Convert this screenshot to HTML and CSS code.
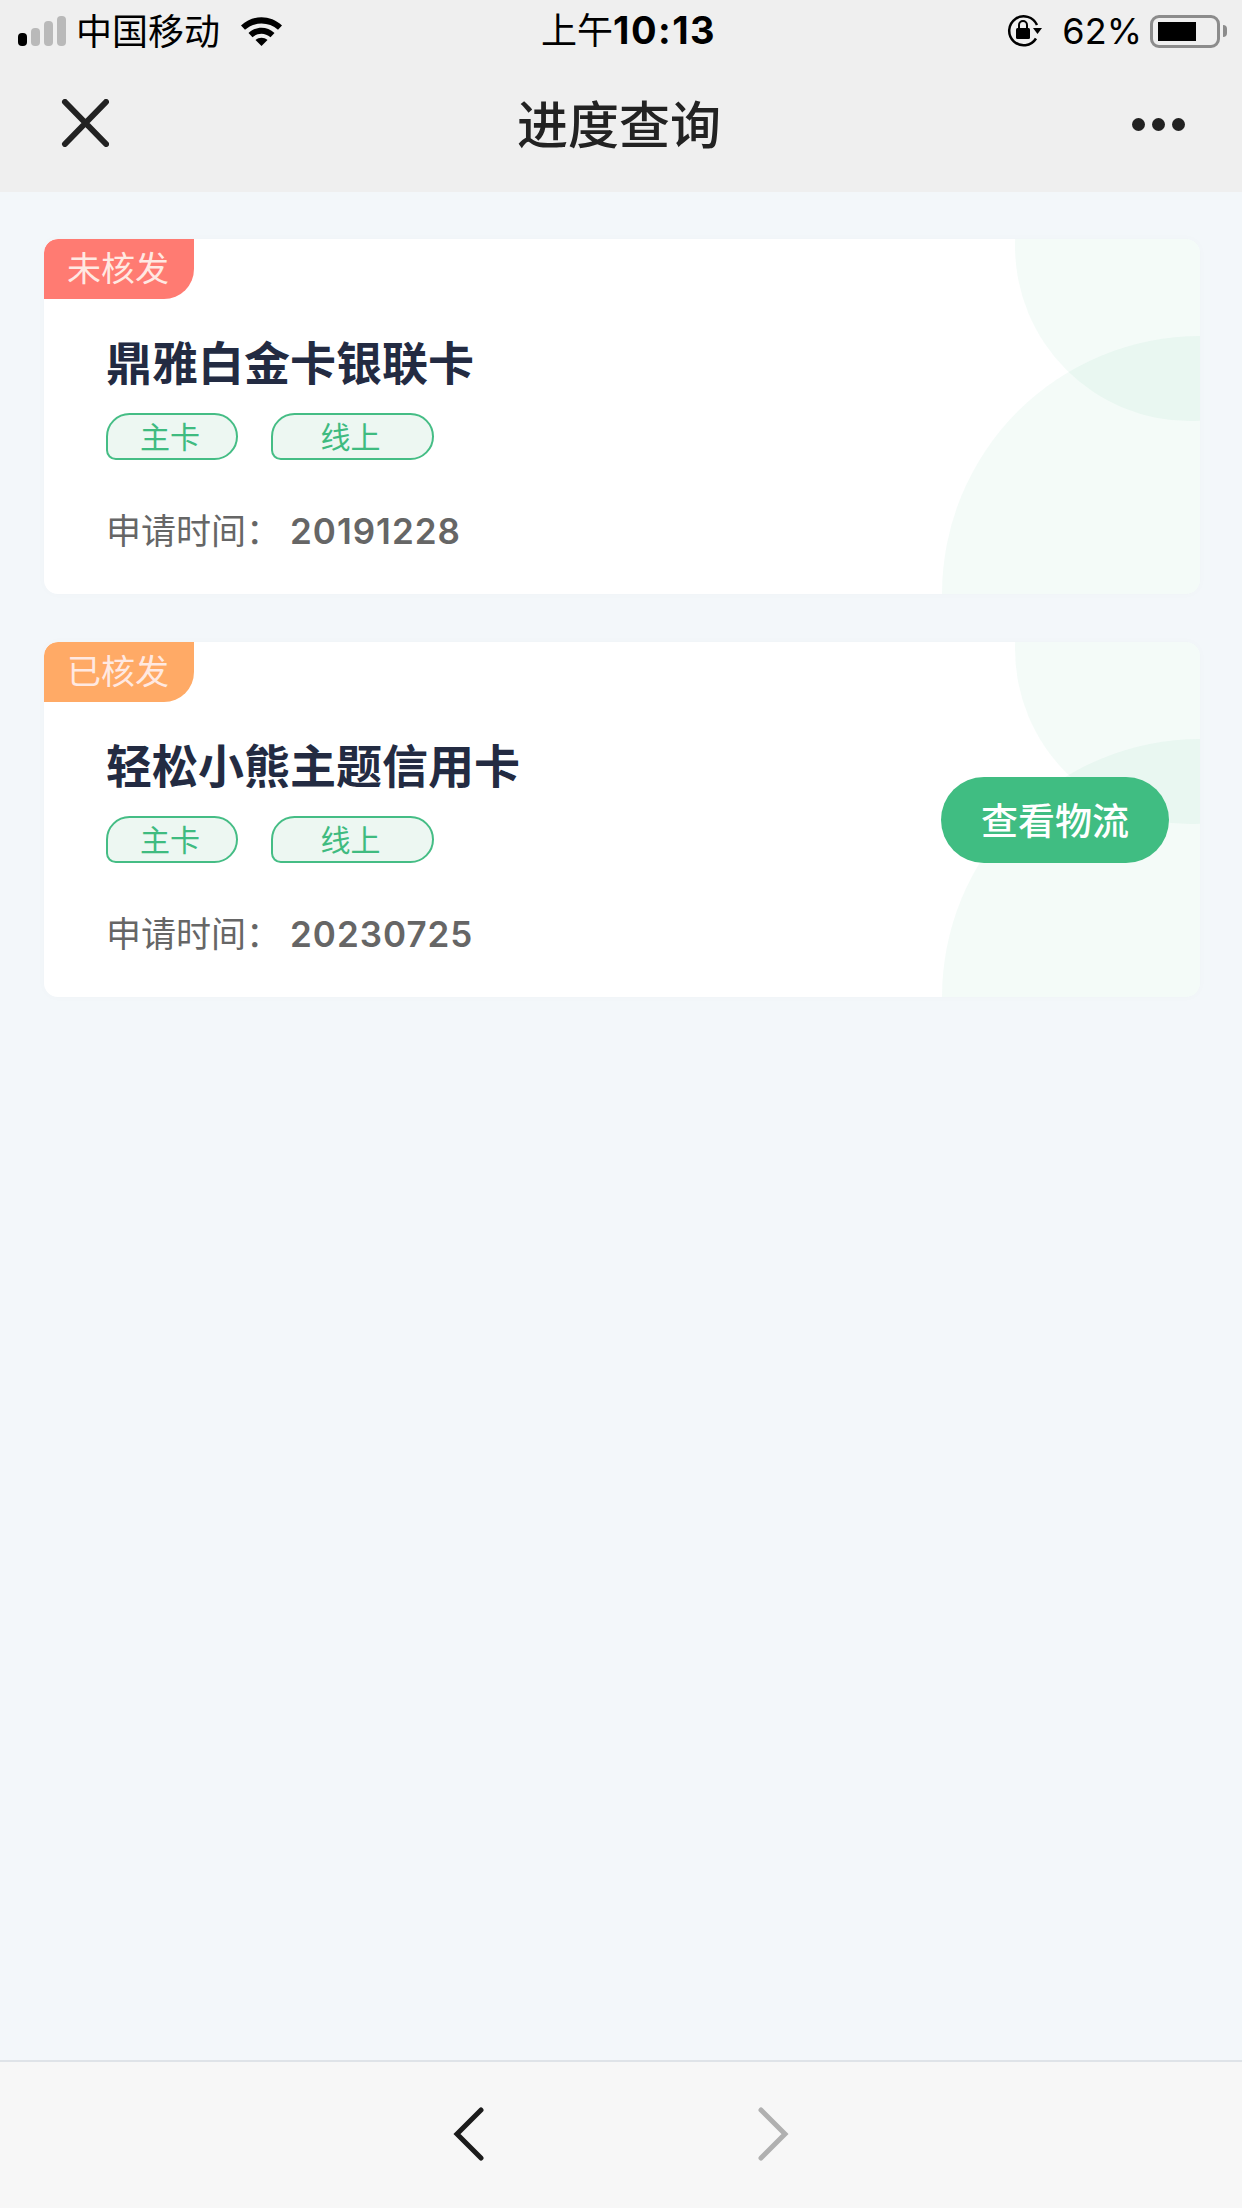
FILE: index.html
```html
<!DOCTYPE html>
<html>
<head>
<meta charset="utf-8">
<title>进度查询</title>
<link rel="stylesheet" href="styles.css">
</head>
<body>
<div class="app">
  <div class="topBar">
    <div class="statusBar">
      <div class="statusLeft">
        <div class="signal">
          <span class="bar bar1"></span>
          <span class="bar bar2"></span>
          <span class="bar bar3"></span>
          <span class="bar bar4"></span>
        </div>
        <span class="carrier">中国移动</span>
        <svg class="wifi" width="43" height="30" viewBox="0 0 43 30">
          <path d="M1 9.500C12.500 -1.500 30.500 -1.500 42 9.500L38 13.800C29 5.500 14 5.500 5 13.800Z" fill="#000"/>
          <path d="M8.500 17C16 10 27 10 34.500 17L30.500 21.200C25 16.500 18 16.500 12.500 21.200Z" fill="#000"/>
          <path d="M15.500 24C19 21 24 21 27.500 24L21.500 30Z" fill="#000"/>
        </svg>
      </div>
      <div class="clock">上午<b>10:13</b></div>
      <div class="statusRight">
        <svg class="rotLock" width="36" height="34" viewBox="0 0 36 34">
          <path d="M29 24.500A14.500 14.500 0 1 1 30 11" fill="none" stroke="#000" stroke-width="2.500"/>
          <path d="M26 14L35 14L30.500 20Z" fill="#000"/>
          <rect x="9" y="14" width="14" height="11" rx="1.500" fill="#000"/>
          <path d="M12 14V11A4 4 0 0 1 20 11V14" fill="none" stroke="#000" stroke-width="2"/>
        </svg>
        <span class="percent">62%</span>
        <div class="battery"><div class="batteryFill"></div></div>
        <span class="batteryCap"></span>
      </div>
    </div>
    <div class="navBar">
      <svg class="closeIcon" width="48" height="48" viewBox="0 0 48 48">
        <path d="M4 3L45 45M45 3L4 45" stroke="#222" stroke-width="6" stroke-linecap="round"/>
      </svg>
      <div class="navTitle">进度查询</div>
      <div class="moreDots"><span></span><span></span><span></span></div>
    </div>
  </div>

  <div class="content">
    <div class="card">
      <span class="circleTop"></span>
      <span class="circleBottom"></span>
      <div class="cardInfo">
        <div class="stateTag stateRed">未核发</div>
        <div class="cardName">鼎雅白金卡银联卡</div>
        <div class="chips">
          <span class="chip chipShort">主卡</span>
          <span class="chip chipLong">线上</span>
        </div>
        <div class="applyDate">申请时间：<span class="dateNum">20191228</span></div>
      </div>
    </div>

    <div class="card">
      <span class="circleTop"></span>
      <span class="circleBottom"></span>
      <div class="cardInfo">
        <div class="stateTag stateOrange">已核发</div>
        <div class="cardName">轻松小熊主题信用卡</div>
        <div class="chips">
          <span class="chip chipShort">主卡</span>
          <span class="chip chipLong">线上</span>
        </div>
        <div class="applyDate">申请时间：<span class="dateNum">20230725</span></div>
      </div>
      <div class="logisticsBtn">查看物流</div>
    </div>
  </div>

  <div class="bottomBar">
    <svg class="arrow" width="34" height="54" viewBox="0 0 34 54">
      <path d="M29 3L5 27L29 51" fill="none" stroke="#1c1c1c" stroke-width="5" stroke-linecap="round"/>
    </svg>
    <svg class="arrow" width="34" height="54" viewBox="0 0 34 54">
      <path d="M5 3L29 27L5 51" fill="none" stroke="#b0b0b0" stroke-width="5" stroke-linecap="round"/>
    </svg>
  </div>
</div>
</body>
</html>
```

FILE: styles.css
```css
* {
    box-sizing: border-box;
}

body {
    margin: 0;
    background-color: #f3f7fa;
    font-family: "Noto Sans CJK SC", "Inter", sans-serif;
}

.app {
    display: flex;
    flex-direction: column;
    width: 1242px;
    height: 2208px;
    overflow: hidden;
}

/* top area */
.topBar {
    height: 192px;
    background-color: #efefef;
}

.statusBar {
    position: relative;
    display: flex;
    justify-content: space-between;
    align-items: center;
    height: 62px;
    padding: 0 15px 0 18px;
    color: #000;
}

.statusLeft {
    display: flex;
    align-items: center;
}

.signal {
    display: flex;
    align-items: flex-end;
    gap: 4px;
    height: 30px;
}

.bar {
    width: 9px;
    border-radius: 4px;
    background-color: #b9b9b9;
}

.bar1 {
    height: 13px;
    background-color: #000;
}

.bar2 {
    height: 18px;
}

.bar3 {
    height: 25px;
}

.bar4 {
    height: 30px;
}

.carrier {
    margin: -5px 0 0 10px;
    font-size: 36px;
    line-height: 40px;
}

.wifi {
    margin-left: 20px;
}

.clock {
    position: absolute;
    left: 541px;
    top: 5px;
    font-size: 36px;
    line-height: 46px;
}

.clock b {
    font-family: "Inter", sans-serif;
    font-weight: 700;
    font-size: 38px;
    letter-spacing: 1.500px;
}

.statusRight {
    display: flex;
    align-items: center;
}

.percent {
    margin-left: 19px;
    font-family: "Inter", sans-serif;
    font-size: 36px;
}

.battery {
    width: 70px;
    height: 33px;
    margin-left: 8px;
    padding: 4px 5px;
    border: 3px solid #8c8c8c;
    border-radius: 9px;
}

.batteryFill {
    width: 38px;
    height: 100%;
    background-color: #000;
}

.batteryCap {
    width: 4px;
    height: 12px;
    margin-left: 3px;
    border-radius: 0 4px 4px 0;
    background-color: #8c8c8c;
}

.navBar {
    position: relative;
    display: flex;
    justify-content: space-between;
    align-items: center;
    height: 130px;
    padding: 0 57px 8px 61px;
}

.navTitle {
    position: absolute;
    left: 0;
    right: 0;
    top: 33px;
    padding-right: 4px;
    text-align: center;
    font-size: 51px;
    line-height: 54px;
    font-weight: 500;
    color: #222;
}

.moreDots {
    display: flex;
    gap: 7px;
    margin-top: 2px;
}

.moreDots span {
    width: 13px;
    height: 13px;
    border-radius: 50%;
    background-color: #222;
}

/* cards */
.content {
    flex: 1;
    display: flex;
    flex-direction: column;
    gap: 48px;
    padding: 47px 42px 0 44px;
}

.card {
    position: relative;
    display: flex;
    justify-content: space-between;
    align-items: center;
    height: 355px;
    overflow: hidden;
    border-radius: 14px;
    background-color: #fff;
    box-shadow: 0 0 10px rgba(0, 0, 0, 0.02);
}

.circleTop {
    position: absolute;
    left: 971px;
    top: -168px;
    width: 350px;
    height: 350px;
    border-radius: 50%;
    background-color: rgba(64, 190, 128, 0.06);
}

.circleBottom {
    position: absolute;
    left: 898px;
    top: 97px;
    width: 516px;
    height: 516px;
    border-radius: 50%;
    background-color: rgba(64, 190, 128, 0.06);
}

.cardInfo {
    position: relative;
    align-self: flex-start;
}

.stateTag {
    width: 150px;
    height: 60px;
    padding-right: 2px;
    border-radius: 14px 0 30px 0;
    text-align: center;
    font-size: 34px;
    line-height: 56px;
    color: #ffe9e2;
}

.stateRed {
    background-color: #ff7b72;
}

.stateOrange {
    background-color: #ffaa66;
}

.cardName {
    margin: 31px 0 0 62px;
    font-size: 46px;
    line-height: 60px;
    font-weight: 700;
    color: #232b42;
}

.chips {
    display: flex;
    gap: 33px;
    margin: 23px 0 0 62px;
}

.chip {
    height: 47px;
    padding-right: 4px;
    border: 2px solid #45bd85;
    border-radius: 24px 24px 24px 10px;
    background-color: #edf7f2;
    text-align: center;
    font-size: 30px;
    line-height: 41px;
    color: #3fbb80;
}

.chipShort {
    width: 132px;
}

.chipLong {
    width: 163px;
}

.applyDate {
    margin: 45px 0 0 62px;
    font-size: 35px;
    line-height: 48px;
    color: #666;
}

.dateNum {
    margin-left: 9px;
    font-family: "Inter", sans-serif;
    font-size: 35px;
    font-weight: 600;
    letter-spacing: 1px;
}

.logisticsBtn {
    position: relative;
    width: 228px;
    height: 86px;
    margin-right: 31px;
    border-radius: 43px;
    background-color: #40bd82;
    text-align: center;
    font-size: 37px;
    font-weight: 500;
    line-height: 84px;
    color: #fff;
}

/* bottom area */
.bottomBar {
    display: flex;
    justify-content: center;
    align-items: center;
    gap: 270px;
    height: 148px;
    padding-bottom: 2px;
    border-top: 2px solid #dfe3e8;
    background-color: #f7f7f7;
}
```
